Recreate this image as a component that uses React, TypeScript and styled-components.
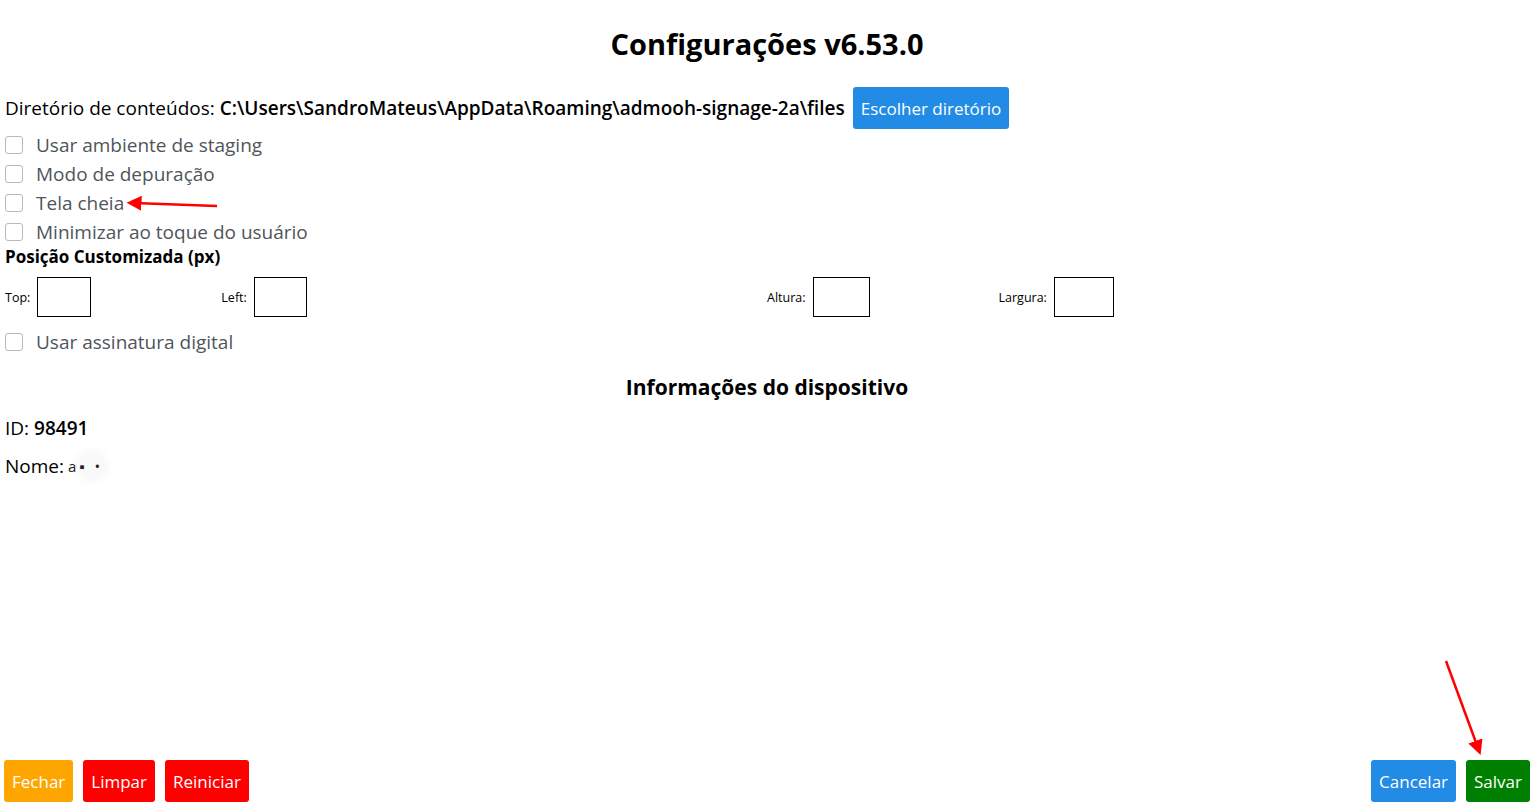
import React from 'react';
import styled, { createGlobalStyle } from 'styled-components';

const GlobalStyle = createGlobalStyle`
  html, body {
    margin: 0;
    padding: 0;
    background: #ffffff;
  }
  body {
    font-family: "Open Sans", "Noto Sans", "Liberation Sans", sans-serif;
    color: #000000;
  }
`;

const Page = styled.div`
  position: relative;
  box-sizing: border-box;
  height: 807px;
  padding: 0 2px 5px 4px;
  display: flex;
  flex-direction: column;
`;

const Title = styled.h1`
  margin: 24px 0 0;
  height: 40px;
  font-size: 29px;
  font-weight: 700;
  text-align: center;
  line-height: 40px;
`;

const DirRow = styled.div`
  margin-top: 23px;
  padding-left: 1px;
  display: flex;
  align-items: center;
  gap: 8px;
  font-size: 19px;
`;

const DirPath = styled.b`
  font-weight: 600;
`;

const Button = styled.button<{ $bg: string }>`
  height: 42px;
  padding: 0 8px;
  border: none;
  border-radius: 3px;
  background: ${p => p.$bg};
  color: #ffffff;
  font-family: inherit;
  font-size: 17px;
  cursor: pointer;
`;

const CheckRow = styled.label`
  height: 29px;
  padding-left: 1px;
  display: flex;
  align-items: center;
  gap: 13px;
  font-size: 19px;
  color: #4f555b;
`;

const Box = styled.span`
  box-sizing: border-box;
  width: 18px;
  height: 18px;
  border: 1.5px solid #b9b9b9;
  border-radius: 3px;
  background: #ffffff;
`;

const SubHeading = styled.div`
  padding-left: 1px;
  height: 22px;
  line-height: 22px;
  font-size: 17px;
  font-weight: 700;
`;

const PositionGrid = styled.div`
  margin: 9px 0 10px;
  padding-left: 1px;
  display: grid;
  grid-template-columns: 762px 1fr;
`;

const FieldPair = styled.div<{ $gap: number }>`
  display: flex;
  gap: ${p => p.$gap}px;
`;

const Field = styled.div`
  display: flex;
  align-items: center;
  gap: 7px;
  font-size: 12.5px;
`;

const Box40 = styled.input<{ $w: number }>`
  box-sizing: border-box;
  width: ${p => p.$w}px;
  height: 40px;
  border: 1px solid #000000;
  border-radius: 0;
  padding: 0;
  margin: 0;
`;

const SectionTitle = styled.div`
  margin-top: 17px;
  height: 28px;
  line-height: 28px;
  text-align: center;
  font-size: 21px;
  font-weight: 700;
`;

const InfoLine = styled.div<{ $top: number }>`
  margin-top: ${p => p.$top}px;
  padding-left: 1px;
  height: 26px;
  line-height: 26px;
  font-size: 19px;
  display: flex;
  align-items: center;
`;

const InfoValue = styled.span`
  margin-left: 5px;
  font-weight: 600;
`;

const Masked = styled.span`
  margin-left: 4px;
  padding: 6px 12px 6px 0;
  border-radius: 50%;
  background: radial-gradient(circle, #f9f9f9 40%, #ffffff 70%);
  font-size: 15px;
  letter-spacing: 3px;
  color: #222222;
`;

const Footer = styled.div`
  margin-top: auto;
  display: flex;
  align-items: center;
`;

const ButtonGroup = styled.div`
  display: flex;
  gap: 10px;
`;

const Spacer = styled.div`
  flex: 1;
`;

const Annotations = styled.svg`
  position: absolute;
  left: 0;
  top: 0;
  pointer-events: none;
`;

const options = [
  'Usar ambiente de staging',
  'Modo de depuração',
  'Tela cheia',
  'Minimizar ao toque do usuário',
];

const Check: React.FC<{ label: string }> = ({ label }) => (
  <CheckRow>
    <Box />
    {label}
  </CheckRow>
);

export default function App() {
  return (
    <>
      <GlobalStyle />
      <Page>
        <Title>Configurações v6.53.0</Title>
        <DirRow>
          <span>
            Diretório de conteúdos: <DirPath>C:\Users\SandroMateus\AppData\Roaming\admooh-signage-2a\files</DirPath>
          </span>
          <Button $bg="#228be6">Escolher diretório</Button>
        </DirRow>
        <div style={{ height: 1 }} />
        {options.map(o => <Check key={o} label={o} />)}
        <SubHeading>Posição Customizada (px)</SubHeading>
        <PositionGrid>
          <FieldPair $gap={130}>
            <Field>Top: <Box40 $w={54} /></Field>
            <Field>Left: <Box40 $w={53} /></Field>
          </FieldPair>
          <FieldPair $gap={129}>
            <Field>Altura: <Box40 $w={57} /></Field>
            <Field>Largura: <Box40 $w={60} /></Field>
          </FieldPair>
        </PositionGrid>
        <Check label="Usar assinatura digital" />
        <SectionTitle>Informações do dispositivo</SectionTitle>
        <InfoLine $top={14}>ID:<InfoValue>98491</InfoValue></InfoLine>
        <InfoLine $top={12}>Nome:<Masked>a▪ •</Masked></InfoLine>
        <Footer>
          <ButtonGroup>
            <Button $bg="#ffa500">Fechar</Button>
            <Button $bg="#ff0000">Limpar</Button>
            <Button $bg="#ff0000">Reiniciar</Button>
          </ButtonGroup>
          <Spacer />
          <ButtonGroup>
            <Button $bg="#228be6">Cancelar</Button>
            <Button $bg="#008000">Salvar</Button>
          </ButtonGroup>
        </Footer>
        <Annotations width="1532" height="807">
          <defs>
            <marker id="head" markerWidth="6" markerHeight="6" refX="3" refY="3" orient="auto">
              <path d="M0,0 L6,3 L0,6 z" fill="#ff0000" />
            </marker>
          </defs>
          <line x1="217" y1="206" x2="134" y2="203" stroke="#ff0000" strokeWidth="2.5" markerEnd="url(#head)" />
          <line x1="1446" y1="661" x2="1478" y2="748" stroke="#ff0000" strokeWidth="2.5" markerEnd="url(#head)" />
        </Annotations>
      </Page>
    </>
  );
}
